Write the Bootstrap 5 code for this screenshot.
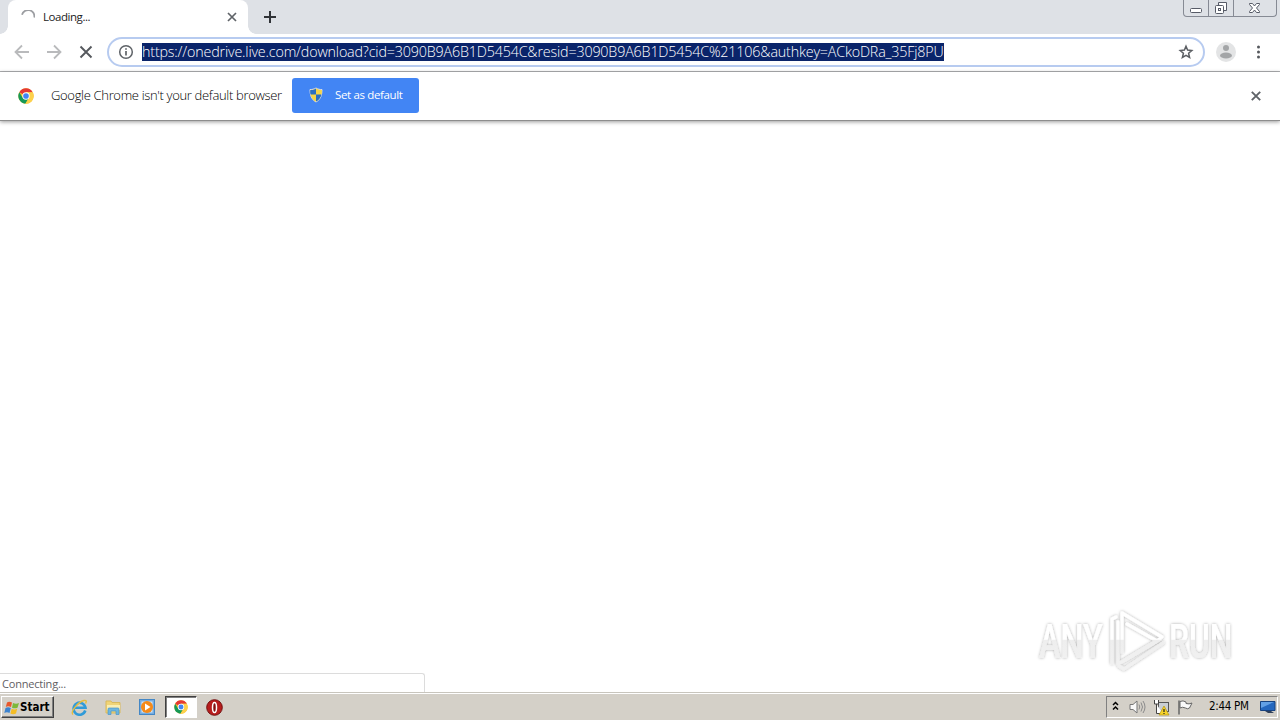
<!DOCTYPE html>
<html lang="en">
<head>
<meta charset="utf-8">
<title>Loading...</title>
<link href="https://cdn.jsdelivr.net/npm/bootstrap@5.3.0/dist/css/bootstrap.min.css" rel="stylesheet">
<style>
html,body{height:100%;overflow:hidden}
body{font-family:"Open Sans","Noto Sans",sans-serif;color:#222;background:#fff;line-height:1}
svg{display:block;flex:none}
.screen{width:1280px;height:720px}
.tabs{height:34px;background:#dee1e6;padding-left:8px}
.tab{width:240px;height:34px;background:#fff;border-radius:8px 8px 0 0;padding:0 11px 0 13px;position:relative}
.tab::before,.tab::after{content:"";position:absolute;bottom:0;width:8px;height:8px}
.tab::before{left:-8px;background:radial-gradient(circle at 0 0,transparent 7.5px,#fff 8px)}
.tab::after{right:-8px;background:radial-gradient(circle at 100% 0,transparent 7.5px,#fff 8px)}
.tab-title{font-size:11.5px;margin-left:8px;letter-spacing:-.45px}
.winbtns{width:94px;height:17px;margin-right:3px;border:1px solid #868a94;border-top:0;border-radius:0 0 4px 4px}
.winbtns>span{height:16px;display:flex;justify-content:center;align-items:center}
.winbtns>span+span{border-left:1px solid #868a94}
.tools{height:38px;border-bottom:1px solid #b0b1b3;padding:0 0 2px 14px}
.omni{width:1098px;height:30px;border:2px solid #b7cbf0;border-radius:15px;margin-left:14px;padding:0 9px}
.url{width:802px;height:18px;line-height:17px;background:#0a246a;color:#fff;font-size:14.3px;letter-spacing:-.165px;font-weight:300;margin-left:8px;white-space:nowrap}
.info{height:49px;padding:0 0 2px 18px;border-bottom:1px solid #8d8d8d;box-shadow:0 1px 4px rgba(0,0,0,.4)}
.info-text{width:229px;font-size:13px;font-weight:300;color:#000;letter-spacing:-.33px;margin-left:17px;white-space:nowrap}
.setdef{width:127px;height:35px;background:#4285f4;color:#fff;border-radius:3px;font-size:11.5px;letter-spacing:-.35px;margin-left:12px;padding:0 0 0 16px;border:0;line-height:1}
.page{position:relative}
.status{width:425px;height:19px;border:1px solid #dcdcdc;border-left:0;border-bottom:0;border-radius:0 3px 0 0;color:#5f6063;font-size:11px;letter-spacing:-.2px;padding-left:2px;position:absolute;left:0;bottom:0}
.wm{position:absolute;right:39px;bottom:14px;overflow:visible}
.taskbar{height:28px;background:#d4d0c8;border-top:1px solid #c8c5bd;box-shadow:inset 0 1px #fff;padding:3px 2px 3px 1px;font-family:"DejaVu Sans Condensed","DejaVu Sans",sans-serif}
.taskbar>svg{position:relative;top:1px}
.start{width:53px;height:22px;border:1px solid;border-color:#fff #404040 #404040 #fff;box-shadow:inset -1px -1px #808080;font-weight:700;font-size:11.5px;padding:2px 0 0 2px;color:#000}
.active-app{width:32px;height:22px;background:#fff;border:1px solid;border-color:#404040 #fff #fff #404040;box-shadow:inset 1px 1px #808080}
.tray{width:172px;height:22px;border:1px solid;border-color:#808080 #fff #fff #808080;padding:1px 0 0 5px}
.clock{font-size:11.5px;color:#000;letter-spacing:-.3px;white-space:nowrap;width:40px}
</style>
</head>
<body>
<svg width="0" height="0" class="position-absolute">
<defs>
<symbol id="chrome" viewBox="0 0 48 48"><circle cx="24" cy="24" r="23" fill="#fbc02d"/><path d="M24 24L4 12.500A23 23 0 0 1 44 12.500H24z" fill="#e53935"/><path d="M4 12.500A23 23 0 0 0 22 47L33 29 24 24 14 29z" fill="#159957"/><path d="M24 13H44.200A23 23 0 0 1 22 47L33.500 29z" fill="#fdd14c"/><circle cx="24" cy="24" r="11" fill="#fff"/><circle cx="24" cy="24" r="8.500" fill="#4285f4"/></symbol>
</defs></svg>
<div class="screen d-flex flex-column">
<header class="tabs d-flex align-items-start">
 <div class="tab d-flex align-items-center">
  <svg width="14" height="14" viewBox="0 0 14 14"><path d="M1 4.800A6.300 6.300 0 0 1 13.300 7.500" fill="none" stroke="#9c9ea2" stroke-width="1.800"/></svg>
  <span class="tab-title">Loading...</span>
  <svg class="ms-auto" width="10" height="10" viewBox="0 0 10 10"><path d="M1 1l8 8M9 1L1 9" stroke="#5f6368" stroke-width="1.700"/></svg>
 </div>
 <svg style="margin:11px 0 0 16px" width="12" height="12" viewBox="0 0 12 12"><path d="M6 0v12M0 6h12" stroke="#303337" stroke-width="2"/></svg>
 <div class="winbtns ms-auto d-flex">
  <span style="width:24px"><svg width="14" height="14" viewBox="0 0 14 14"><rect x="1.500" y="7.500" width="11" height="4" rx="1" fill="#fff" stroke="#575b67"/></svg></span>
  <span style="width:25px"><svg width="14" height="14" viewBox="0 0 14 14"><path d="M4.500 1.500h8v8h-3M4.500 1.500v3" fill="#fff" stroke="#575b67"/><rect x="1.500" y="4.500" width="8" height="8" rx="1" fill="#fff" stroke="#575b67"/><rect x="4.500" y="7.500" width="2" height="2" fill="none" stroke="#575b67"/></svg></span>
  <span class="flex-grow-1" style="padding-right:1px"><svg width="13" height="12" viewBox="0 0 13 12"><path d="M1.500 1.500h3l2 2.500 2-2.500h3v1L8.500 6l3 3.500v1h-3l-2-2.500-2 2.500h-3v-1L4.500 6l-3-3.500z" fill="#fff" stroke="#575b67"/></svg></span>
 </div>
</header>
<nav class="tools d-flex align-items-center">
 <svg width="16" height="16" viewBox="0 0 16 16"><path d="M15 8H2M8 1.500L1.500 8 8 14.500" fill="none" stroke="#b9babc" stroke-width="1.800"/></svg>
 <svg style="margin-left:16px" width="16" height="16" viewBox="0 0 16 16"><path d="M1 8h13M8 1.500L14.500 8 8 14.500" fill="none" stroke="#b9babc" stroke-width="1.800"/></svg>
 <svg style="margin-left:17px" width="14" height="14" viewBox="0 0 14 14"><path d="M1.500 1.500l11 11M12.500 1.500l-11 11" stroke="#55585d" stroke-width="1.900"/></svg>
 <div class="omni d-flex align-items-center">
  <svg width="16" height="16" viewBox="0 0 16 16"><circle cx="8" cy="8" r="6.300" fill="none" stroke="#5f6368" stroke-width="1.500"/><path d="M8 4.200v1.600M8 7v4.500" stroke="#5f6368" stroke-width="1.700"/></svg>
  <div class="url">https://onedrive.live.com/download?cid=3090B9A6B1D5454C&amp;resid=3090B9A6B1D5454C%21106&amp;authkey=ACkoDRa_35Fj8PU</div>
  <svg class="ms-auto" width="16" height="16" viewBox="0 0 16 16"><path d="M8 2.200l1.600 3.900 4.200.4-3.200 2.800 1 4.200L8 11.300l-3.600 2.200 1-4.200-3.200-2.800 4.200-.4z" fill="none" stroke="#5b5e63" stroke-width="1.500"/></svg>
 </div>
 <svg style="margin-left:11px" width="20" height="20" viewBox="0 0 20 20"><circle cx="10" cy="10" r="10" fill="#e3e4e5"/><circle cx="10" cy="6" r="3" fill="#a3a5a7"/><ellipse cx="10" cy="13.500" rx="6" ry="3" fill="#a3a5a7"/></svg>
 <svg style="margin-left:20px" width="4" height="14" viewBox="0 0 4 14"><g fill="#55585d"><circle cx="2.500" cy="2" r="1.500"/><circle cx="2.500" cy="7" r="1.500"/><circle cx="2.500" cy="12" r="1.500"/></g></svg>
</nav>
<div class="info d-flex align-items-center flex-shrink-0">
 <svg style="margin-top:2px" width="16" height="16"><use href="#chrome"/></svg>
 <div class="info-text">Google Chrome isn't your default browser</div>
 <button class="setdef d-flex align-items-center"><svg width="16" height="16" viewBox="0 0 16 16"><path d="M8 1c2 1.200 4 1.600 6 1.500 0 6-1.500 10-6 12.500C3.500 12.500 2 8.500 2 2.500 4 2.600 6 2.200 8 1z" fill="#f5d547" stroke="#d8dce4"/><path d="M8 7.500H2.500c.8 3 2.500 5.500 5.500 7zM8 1.500v6h5.500c.3-1.500.5-3 .2-4.500C12 3.200 10 2.800 8 1.500z" fill="#f5d547"/><path d="M8 1.500v6H2.500C2.200 6 2 4.500 2.300 3 4 3.200 6 2.800 8 1.500zM8 7.500h5.500c-.8 3-2.500 5.500-5.500 7z" fill="#2b6fc2"/></svg><span style="margin-left:11px">Set as default</span></button>
 <svg class="ms-auto" style="margin:2px 19px 0 0" width="10" height="10" viewBox="0 0 10 10"><path d="M.8.8l8.400 8.400M9.200.8L.8 9.200" stroke="#5f6368" stroke-width="1.900"/></svg>
</div>
<main class="page flex-grow-1">
 <div class="status d-flex align-items-center">Connecting...</div>
 <svg class="wm" width="216" height="74" viewBox="1024 604 216 74">
  <defs><linearGradient id="g" x1="0" x2="0" y1="620" y2="662" gradientUnits="userSpaceOnUse"><stop offset=".46" stop-color="#fff"/><stop offset=".48" stop-color="#eee"/><stop offset="1" stop-color="#f1f1f1"/></linearGradient>
  <linearGradient id="t" x1="0" x2="0" y1="-38" y2="4" gradientUnits="userSpaceOnUse"><stop offset=".46" stop-color="#fff"/><stop offset=".48" stop-color="#eee"/><stop offset="1" stop-color="#f1f1f1"/></linearGradient>
  <filter id="s" x="-20%" y="-20%" width="140%" height="140%"><feDropShadow dx="0" dy="0" stdDeviation="1.700" flood-color="#000" flood-opacity=".34"/></filter></defs>
  <g filter="url(#s)">
   <g fill="url(#t)" font-family="Roboto,sans-serif" font-weight="500" font-size="49">
   <text transform="translate(1038 658) scale(.66 1)">ANY</text>
   <text transform="translate(1168 658) scale(.65 1)">RUN</text>
   </g>
   <g fill="none" stroke="url(#g)" stroke-width="3.300" stroke-linejoin="round" stroke-linecap="round"><path d="M1111 663V619l4-2"/><path d="M1121 652V613l40 24M1117 622v42l7-4 35-21"/><path d="M1126 624l30 17-32 19M1162 643l-39 26-5-3"/></g>
  </g>
 </svg>
</main>
<footer class="taskbar d-flex align-items-center flex-shrink-0">
 <div class="start d-flex align-items-center"><svg width="16" height="16" viewBox="0 0 16 16"><path d="M3 2.500q2-1.500 5 0L7 7Q4 5.500 1.800 7z" fill="#e8582b"/><path d="M9 3q3 1.500 6 0l-1.500 4.700q-3 1.300-5.500 0z" fill="#7db83a"/><path d="M1.500 8q2.500-1.500 5.300 0L5.500 13Q3 11.500.3 13z" fill="#3c83cf"/><path d="M7.700 8.700q2.500 1.500 5.500 0L12 13.500q-3 1.500-5.600 0z" fill="#f5bd25"/></svg><span>Start</span></div>
 <svg style="margin-left:17px" width="17" height="17" viewBox="0 0 17 17"><path d="M14.300 11.500A6 6 0 1 1 14.500 8.800H3.500" fill="none" stroke="#319bd8" stroke-width="2.600"/><path d="M2 15.500C-1 13 7 3 13 1.500c3-.5 2.500 1.500 1.500 3" fill="none" stroke="#e6bd3e" stroke-width="1.400"/></svg>
 <svg style="margin-left:17px" width="17" height="17" viewBox="0 0 17 17"><path d="M1 2h5l1 1.500h8V14H1z" fill="#f0d477" stroke="#d9b95c"/><path d="M2 6h13v5H2z" fill="#faeeb2"/><path d="M3 15.500V10q0-1 1-1h9q1 0 1 1v5.500h-3V12H6v3.500z" fill="#6db6df" stroke="#4b96c8" stroke-width=".7"/></svg>
 <svg style="margin-left:17px" width="17" height="17" viewBox="0 0 17 17"><rect x=".5" y=".5" width="15" height="15" fill="#75ace0" stroke="#4487c5"/><rect x="2.500" y="2.500" width="11" height="11" fill="#d6e8f8"/><circle cx="8" cy="8" r="6" fill="#f58a19"/><path d="M6 4.500L11.500 8 6 11.500z" fill="#fff"/></svg>
 <div class="active-app d-flex align-items-center justify-content-center" style="margin-left:9px"><svg width="14" height="14"><use href="#chrome"/></svg></div>
 <svg style="margin-left:9px" width="17" height="17" viewBox="0 0 17 17"><circle cx="8.500" cy="8.500" r="7.800" fill="#b71d1d" stroke="#731010"/><ellipse cx="8.500" cy="8.500" rx="2" ry="5" fill="#831010" stroke="#fff" stroke-width="1.500"/></svg>
 <div class="tray ms-auto d-flex align-items-center">
  <svg style="margin-top:-3px" width="7" height="10" viewBox="0 0 7 10"><path d="M1 4l2.500-2.500L6 4M1 8.500L3.500 6 6 8.500" fill="none" stroke="#000" stroke-width="1.500"/></svg>
  <svg style="margin-left:10px" width="17" height="16" viewBox="0 0 17 16"><path d="M1 5.500h3L8 2v12L4 10.500H1z" fill="#f8f8f8" stroke="#777"/><path d="M10 5.500q1.500 2.500 0 5M12 3.500q3 4.500 0 9M14 2q4 6 0 12" fill="none" stroke="#8b8b8b"/></svg>
  <svg style="margin-left:7px" width="17" height="17" viewBox="0 0 17 17"><rect x="5.500" y="3.500" width="10" height="9" fill="#c9ced4" stroke="#555"/><path d="M1.500 1v4h4V1M3.500 5v9.500h6" fill="#fff" stroke="#444"/><path d="M11 7l5 9H6z" fill="#f8d429" stroke="#b29312" stroke-width=".7"/><path d="M11 10v3m0 1v1" stroke="#222" stroke-width="1.200"/></svg>
  <svg style="margin-left:7px" width="17" height="17" viewBox="0 0 17 17"><path d="M3 2.500q3-1.500 6 .5v1.500q3 1 6-.5L12.500 9q-2 1.500-4 0-3-1.500-5.500 0z" fill="#fafafa" stroke="#666"/><path d="M2 1.500v14" stroke="#666" stroke-width="1.500"/></svg>
  <span class="clock" style="margin-left:15px">2:44 PM</span>
  <svg style="margin-left:11px" width="16" height="14" viewBox="0 0 16 14"><path d="M.5 1.500h14.500v9H.5z" fill="#2467be" stroke="#17427f"/><path d="M1 2h13L1 8z" fill="#62a0e5"/><path d="M5 11h6l3 2H8z" fill="#31415a"/></svg>
 </div>
</footer>
</div>
<script src="https://cdn.jsdelivr.net/npm/bootstrap@5.3.0/dist/js/bootstrap.bundle.min.js"></script>
</body>
</html>
